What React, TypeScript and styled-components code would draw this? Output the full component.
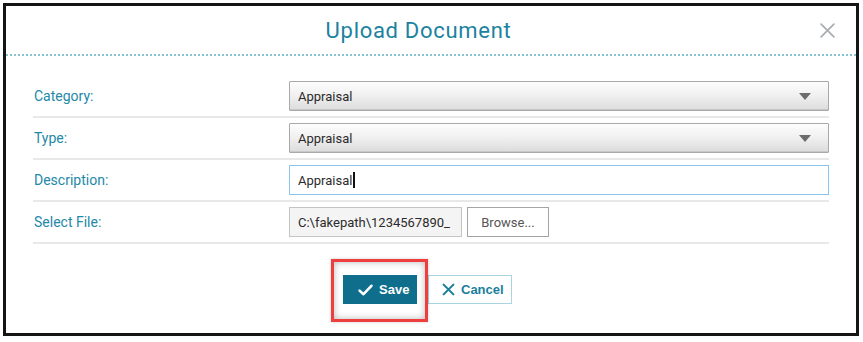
import styled, { createGlobalStyle } from 'styled-components'

const GlobalStyle = createGlobalStyle`
  html, body {
    margin: 0;
    padding: 0;
    background: #fff;
  }
  body {
    font-family: Roboto, 'Liberation Sans', Arial, sans-serif;
  }
  svg {
    flex: none;
  }
`

const rows = [
  { label: 'Category:', kind: 'select', value: 'Appraisal' },
  { label: 'Type:', kind: 'select', value: 'Appraisal' },
  { label: 'Description:', kind: 'text', value: 'Appraisal' },
  { label: 'Select File:', kind: 'file', value: 'C:\\fakepath\\1234567890_' },
]

const CaretDown = () => (
  <svg width='12' height='7' viewBox='0 0 12 7'>
    <path d='M0 0 H12 L6 7 Z' fill='#6b6b6b' />
  </svg>
)

const CheckIcon = () => (
  <svg width='15' height='12' viewBox='0 0 15 12'>
    <path d='M1.6 6.6 L5.5 10.2 L13.4 1.8' fill='none' stroke='#fff' strokeWidth='2.6' strokeLinecap='round' strokeLinejoin='round' />
  </svg>
)

const XIcon = ({ color, size, weight }: { color: string; size: number; weight: number }) => (
  <svg width={size} height={size} viewBox='0 0 16 16'>
    <path d='M2 2 L14 14 M14 2 L2 14' fill='none' stroke={color} strokeWidth={weight} strokeLinecap='round' />
  </svg>
)

export default function App() {
  return (
    <>
      <GlobalStyle />
      <Frame>
        <Header>
          <Title>Upload Document</Title>
          <Close aria-label='close'>
            <XIcon color='#a9adb1' size={17} weight={1.6} />
          </Close>
        </Header>
        <Body>
          {rows.map((r) => (
            <Row key={r.label}>
              <Label>{r.label}</Label>
              {r.kind === 'select' && (
                <Select>
                  <span>{r.value}</span>
                  <CaretDown />
                </Select>
              )}
              {r.kind === 'text' && (
                <TextInput>
                  {r.value}
                  <Cursor />
                </TextInput>
              )}
              {r.kind === 'file' && (
                <FileGroup>
                  <FilePath>{r.value}</FilePath>
                  <BrowseButton>Browse...</BrowseButton>
                </FileGroup>
              )}
            </Row>
          ))}
          <Actions>
            <Highlighted>
              <Button $primary>
                <CheckIcon />
                Save
              </Button>
            </Highlighted>
            <Button>
              <XIcon color='#1b7f9c' size={13} weight={2.6} />
              Cancel
            </Button>
          </Actions>
        </Body>
      </Frame>
    </>
  )
}

const Frame = styled.div`
  box-sizing: border-box;
  margin: 3px 0 0 3px;
  width: 856px;
  height: 333px;
  border: 3px solid #141414;
  background: #fff;
  display: flex;
  flex-direction: column;
`
const Header = styled.div`
  height: 48px;
  flex: none;
  display: flex;
  align-items: center;
  justify-content: center;
  position: relative;
  border-bottom: 2px dotted #86c4d3;
`
const Title = styled.h1`
  margin: 0 25px 0 0;
  font-family: Roboto, 'Liberation Sans', sans-serif;
  font-weight: 400;
  font-size: 22px;
  letter-spacing: 0.7px;
  color: #1b82a0;
`
const Close = styled.span`
  position: absolute;
  right: 20px;
  top: 16px;
  display: flex;
`
const Body = styled.div`
  padding: 20px 27px 0 27px;
  display: flex;
  flex-direction: column;
`
const Row = styled.div`
  display: grid;
  grid-template-columns: 256px 540px;
  align-items: center;
  padding: 5px 0 5px;
  border-bottom: 2px solid #e8e8e8;
`
const Label = styled.label`
  padding-left: 1px;
  font-size: 14px;
  color: #2389a8;
`
const fieldBase = `
  box-sizing: border-box;
  height: 30px;
  display: flex;
  align-items: center;
  font-size: 13px;
  color: #2b2b2b;
  font-family: Roboto, 'Liberation Sans', sans-serif;
`
const Select = styled.div`
  ${fieldBase}
  justify-content: space-between;
  padding: 0 17px 0 8px;
  border: 1px solid #a9a9a9;
  border-radius: 1px;
  background: linear-gradient(#fdfdfd 0%, #f1f1f1 45%, #dcdcdc 100%);
  box-shadow: inset 0 -1px 0 #c8c8c8;
`
const TextInput = styled.div`
  ${fieldBase}
  padding: 0 8px;
  border: 1.5px solid #8cc4ee;
  background: #fff;
`
const Cursor = styled.span`
  display: inline-block;
  width: 1.5px;
  height: 16px;
  margin-left: 1px;
  background: #111;
`
const FileGroup = styled.div`
  display: flex;
  gap: 5px;
`
const FilePath = styled.div`
  ${fieldBase}
  width: 173px;
  padding: 0 0 0 8px;
  overflow: hidden;
  white-space: nowrap;
  border: 1px solid #c4c4c4;
  background: #f4f4f4;
`
const BrowseButton = styled.div`
  ${fieldBase}
  width: 82px;
  justify-content: center;
  border: 1px solid #a4a4a4;
  background: #fff;
  color: #555;
`
const Actions = styled.div`
  display: flex;
  justify-content: center;
  gap: 11px;
  padding: 31px 7px 0 0;
`
const Highlighted = styled.span`
  position: relative;
  display: flex;
  &::after {
    content: '';
    position: absolute;
    inset: -16px -11px -18px -12px;
    border: 3px solid #ee3e3e;
    box-shadow: inset 0 0 7px rgba(0, 0, 0, 0.28), 0 0 3px rgba(0, 0, 0, 0.2);
    pointer-events: none;
  }
`
const Button = styled.button<{ $primary?: boolean }>`
  box-sizing: border-box;
  height: 29px;
  padding: ${(p) => (p.$primary ? '0 0 0 14px' : '0 0 0 13px')};
  display: flex;
  align-items: center;
  gap: 6px;
  font-family: 'Liberation Sans', Arial, sans-serif;
  font-size: 13px;
  font-weight: 700;
  cursor: pointer;
  color: ${(p) => (p.$primary ? '#fff' : '#1b7f9c')};
  background: ${(p) => (p.$primary ? '#0e6e8c' : '#fff')};
  border: 1px solid ${(p) => (p.$primary ? '#0e6e8c' : '#a9d5e2')};
  width: ${(p) => (p.$primary ? '74px' : '84px')};
`
